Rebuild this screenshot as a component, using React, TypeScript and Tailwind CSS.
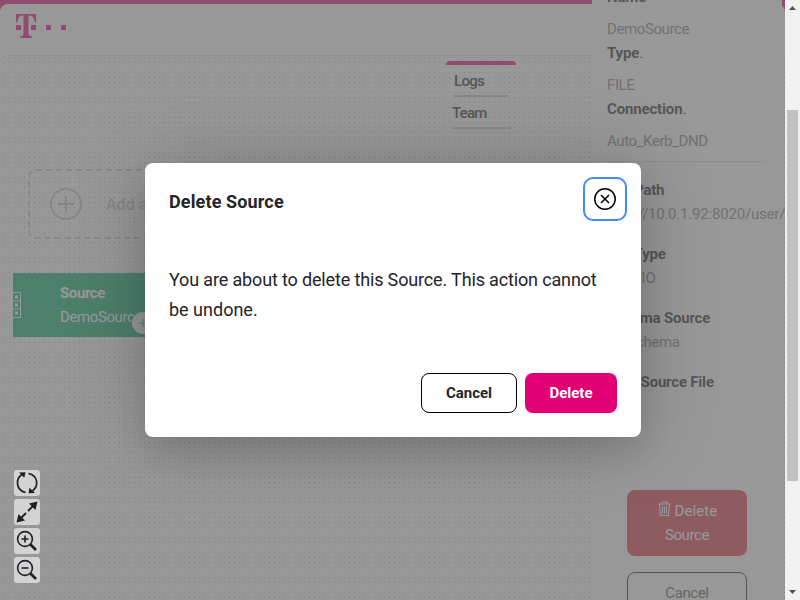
import React from "react";

function Field({ label, value, className = "" }: { label: string; value?: React.ReactNode; className?: string }) {
  return (
    <div className={className}>
      <div className="h-6 font-bold tracking-[-0.2px] text-[#242424]">{label}</div>
      {value && <div className="h-6 text-[#7c7c7c]">{value}</div>}
    </div>
  );
}

function TopField({ label, value, dot = true }: { label: string; value: string; dot?: boolean }) {
  return (
    <div className="h-14">
      <div className="h-8 tracking-[-0.15px] text-[#242424]">
        <span className="font-bold">{label}</span>
        {dot && "."}
      </div>
      <div className="h-6 text-[#7c7c7c]">{value}</div>
    </div>
  );
}

function TelekomLogo() {
  return (
    <svg width="51" height="24" viewBox="0 0 51 24" fill="#e20074">
      <path d="M0 0h20v8.500h-1.300C18.500 4 16.500 1.400 12.500 1.400V19c0 2.500.8 3.300 3.500 3.500V24H4v-1.500C6.700 22.300 7.500 21.500 7.500 19V1.400C3.500 1.400 1.500 4 1.300 8.500H0z" />
      <path d="M0 11h5v5H0zM15 11h5v5h-5zM30 11h5v5h-5zM45 11h5v5h-5z" />
    </svg>
  );
}

function ToolButton({ children }: { children: React.ReactNode }) {
  return (
    <button className="h-[26px] w-[26px] rounded-[3px] bg-[#d3d3d3]">
      <svg width="26" height="26" viewBox="0 0 26 26" fill="none" stroke="#1d2126">
        {children}
      </svg>
    </button>
  );
}

function Toolbar() {
  return (
    <div className="absolute left-[14px] top-[470px] flex flex-col gap-[3px]">
      <ToolButton>
        <path d="M11.500 22.500C2 20 1 9 8 4.500M14.500 3.500C24 5.500 25 16 18.500 21" strokeWidth="1.700" />
        <path d="M5 2.500l6.500-.2-1.200 5.500zM21 23l-6.500.2 1-5.500z" fill="#1d2126" stroke="none" />
      </ToolButton>
      <ToolButton>
        <path d="M5.500 20.500l6.500-6.500M14 12l6.500-6.500" strokeWidth="1.900" />
        <path d="M23.500 2.500l-2 8.500-6.500-6.500zM2.500 23.500L4.500 15l6.500 6.500z" fill="#1d2126" stroke="none" />
      </ToolButton>
      <ToolButton>
        <circle cx="11" cy="11" r="7.400" strokeWidth="1.600" />
        <path d="M7.500 11h7M11 7.500v7" strokeWidth="1.600" />
        <path d="M16 16l6 6" strokeWidth="2.700" />
      </ToolButton>
      <ToolButton>
        <circle cx="11" cy="11" r="7.400" strokeWidth="1.600" />
        <path d="M7.500 11h7" strokeWidth="1.600" />
        <path d="M16 16l6 6" strokeWidth="2.700" />
      </ToolButton>
    </div>
  );
}

function Canvas() {
  return (
    <div className="relative flex-1 rounded-t-lg border-t border-[#dedede] bg-[radial-gradient(circle_at_2.5px_2.5px,#bebebe_0.5px,transparent_1px)] bg-[length:5px_5px] bg-[position:2px_-1px]">
      <div className="absolute left-[446px] top-[5px] w-[70px] text-[15px] font-medium leading-6 text-[#242424]">
        <div className="h-1 rounded-t bg-[#e20074]" />
        <div className="ml-2 mt-1 h-[28px] w-[54px] border-b-2 border-[#c8c8c8] tracking-[-0.7px]">
          Logs
        </div>
        <div className="ml-[6px] mt-1 h-[28px] w-[59px] border-b-2 border-[#c8c8c8] tracking-[-0.8px]">
          Team
        </div>
      </div>

      <div className="absolute left-[28px] top-[113px] flex h-[70px] w-[240px] items-center rounded-lg border-2 border-dashed border-[#c9c9c9] pl-5 text-[#c3c3c3]">
        <svg width="32" height="32" viewBox="0 0 32 32" fill="none" stroke="currentColor" strokeWidth="2">
          <circle cx="16" cy="16" r="15" />
          <path d="M8 16h16M16 8v16" />
        </svg>
        <span className="ml-6 mt-0.5 text-base font-medium">Add a</span>
      </div>

      <div className="absolute left-[13px] top-[217px] flex h-16 w-[180px] items-center bg-[#00ab6b] text-white">
        <svg width="8" height="26" viewBox="0 0 8 26" fill="none" stroke="white">
          <path d="M0 .5h7.500v25H0M0 9h7M0 17h7" />
          <path d="M2 5h3M2 13h3M2 21h3" strokeWidth="3" />
        </svg>
        <div className="ml-[39px] text-[15px] leading-6">
          <div className="font-bold tracking-[-0.4px]">Source</div>
          <div className="tracking-[-0.4px]">DemoSource</div>
        </div>
      </div>
      <div className="absolute left-[132px] top-[256px] flex h-[22px] w-[22px] items-center justify-center rounded-full bg-white">
        <svg width="8" height="8" viewBox="0 0 8 8" stroke="#00ab6b">
          <path d="M0 4h8M4 0v8" />
        </svg>
      </div>
    </div>
  );
}

function Sidebar() {
  return (
    <aside className="absolute left-[592px] top-0 h-[600px] w-[190px] whitespace-nowrap bg-white px-[15px] text-[15px] leading-6 tracking-[-0.4px]">
      <div className="-mt-[15px] h-[177px] w-[160px] border-b border-[#dfdfdf]">
        <TopField label="Name" value="DemoSource" dot={false} />
        <TopField label="Type" value="FILE" />
        <TopField label="Connection" value="Auto_Kerb_DND" />
      </div>
      <div className="mt-4 flex flex-col gap-4">
        <Field
          label="File Path"
          value={
            <>
              <span className="tracking-[-0.45px]">hdfs://</span>
              <span className="tracking-[-0.2px]">10.0.1.92:8020/user/hdfs</span>
            </>
          }
        />
        <Field label="File Type" value={<span className="tracking-[0.3px]">FILE IO</span>} />
        <Field label="Schema Source" value="No schema" />
        <Field label="Data Source File" />
      </div>
      <div className="ml-5 mt-24 flex w-[120px] flex-col gap-4 text-center">
        <button className="h-[66px] rounded-lg bg-[#dc3545] leading-6 text-white">
          <svg className="-mt-[7px] ml-px mr-1 inline-block" width="13" height="16" viewBox="0 0 13 16" fill="none" stroke="currentColor">
            <path d="M0 3h13M4 3V1h5v2M1.500 3l1 11.500h8l1-11.500M4.500 5.500v7M6.500 5.500v7M8.500 5.500v7" strokeWidth="1.100" />
          </svg>
          <span className="tracking-[0.1px]">Delete</span>
          <br />
          Source
        </button>
        <button className="h-[42px] rounded-lg border border-[#242424] leading-6 text-[#555]">Cancel</button>
      </div>
    </aside>
  );
}

function Dialog() {
  return (
    <div className="absolute left-[145px] top-[163px] flex h-[274px] w-[496px] flex-col rounded-lg bg-white px-6 text-[#242429] shadow-[0_4px_80px_rgba(0,0,0,0.2),0_16px_32px_rgba(0,0,0,0.1)]">
      <div className="-mr-[10px] mt-[14px] flex h-11 items-center justify-between">
        <h2 className="mt-1 text-[18px] font-bold tracking-[0.13px]">Delete Source</h2>
        <button className="flex h-11 w-11 items-center justify-center rounded-[10px] border-2 border-[#428bff]">
          <svg width="22" height="22" viewBox="0 0 22 22" fill="none" stroke="#000" strokeWidth="1.500">
            <circle cx="11" cy="11" r="10.200" />
            <path d="M7 7l8 8M15 7l-8 8" />
          </svg>
        </button>
      </div>
      <p className="mt-11 whitespace-nowrap text-[18px] leading-[30px]">
        <span className="tracking-[-0.15px]">You are about to delete this Source. This action cannot</span>
        <br />
        be undone.
      </p>
      <div className="mt-12 flex justify-end gap-2 text-[15px] font-bold">
        <button className="h-10 w-24 rounded-lg border border-black">Cancel</button>
        <button className="h-10 w-[92px] rounded-lg bg-[#e20074] text-white">Delete</button>
      </div>
    </div>
  );
}

function Scrollbar() {
  return (
    <div className="flex h-full w-[15px] flex-col items-center bg-[#f1f1f1]">
      <svg width="15" height="110" viewBox="0 0 15 110" fill="#505050">
        <path d="M4 10l3.500-4L11 10z" />
      </svg>
      <div className="h-[371px] w-[11px] bg-[#c1c1c1]" />
      <svg width="15" height="119" viewBox="0 0 15 119" fill="#505050">
        <path d="M4 109l3.500 4 3.500-4z" />
      </svg>
    </div>
  );
}

export default function App() {
  return (
    <div className="flex h-[600px] w-[800px] overflow-hidden bg-white font-['Roboto','Liberation_Sans',sans-serif]">
      <div className="relative flex h-full w-[785px] flex-col overflow-hidden">
        <div className="bg-[#e20074] pt-1">
          <header className="h-[51px] rounded-t-lg bg-white pl-4 pt-[10px]">
            <TelekomLogo />
          </header>
        </div>
        <Canvas />
        <Sidebar />
        <div className="absolute inset-0 bg-[rgba(108,108,108,0.7)]" />
        <Toolbar />
        <Dialog />
      </div>
      <Scrollbar />
    </div>
  );
}
